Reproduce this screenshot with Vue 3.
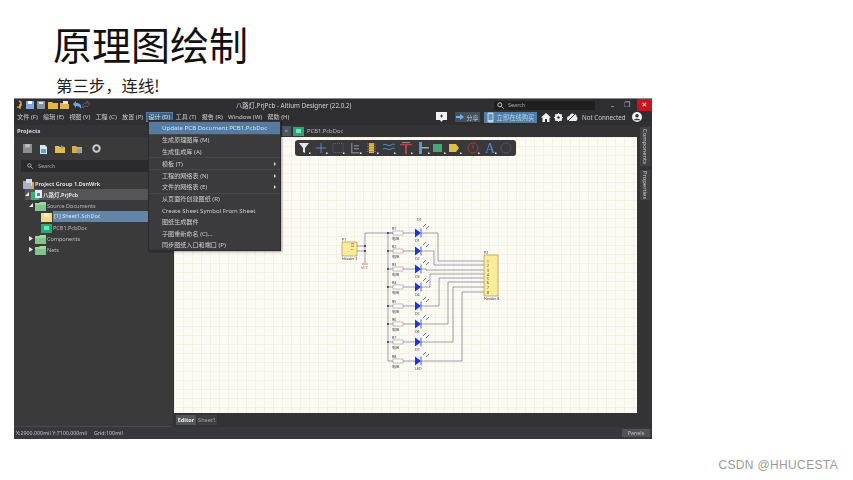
<script setup>
const menuBar = [
  { t: '文件 (F)' }, { t: '编辑 (E)' }, { t: '视图 (V)' }, { t: '工程 (C)' }, { t: '放置 (P)' },
  { t: '设计 (D)', on: true }, { t: '工具 (T)' }, { t: '报告 (R)' }, { t: 'Window (W)' }, { t: '帮助 (H)' }
]
const menuItems = [
  { t: 'Update PCB Document PCB1.PcbDoc', on: true, sep: true },
  { t: '生成原理图库 (M)' },
  { t: '生成集成库 (A)', sep: true },
  { t: '模板 (T)', arrow: true, sep: true },
  { t: '工程的网络表 (N)', arrow: true },
  { t: '文件的网络表 (E)', arrow: true, sep: true },
  { t: '从页面符创建图纸 (R)' },
  { t: 'Create Sheet Symbol From Sheet' },
  { t: '图纸生成器件' },
  { t: '子图重新命名 (C)...' },
  { t: '同步图纸入口和端口 (P)' }
]
const tree = [
  { t: 'Project Group 1.DsnWrk', pad: 9, icon: 'group', cls: 'bold' },
  { t: '八路灯.PrjPcb', pad: 11, icon: 'prj', cls: 'bold grey', arrow: 'open' },
  { t: 'Source Documents', pad: 15, icon: 'folder', arrow: 'open' },
  { t: '[1] Sheet1.SchDoc', pad: 27, icon: 'sch', cls: 'blue' },
  { t: 'PCB1.PcbDoc', pad: 27, icon: 'pcb' },
  { t: 'Components', pad: 15, icon: 'folder', arrow: 'closed' },
  { t: 'Nets', pad: 15, icon: 'folder', arrow: 'closed' }
]
const rows = [
  { y: 234, r: 'R1', d: 'D1', turn: 438, to: 262 },
  { y: 252, r: 'R2', d: 'D2', turn: 434, to: 266 },
  { y: 270, r: 'R3', d: 'D3', turn: 426, to: 271 },
  { y: 288, r: 'R4', d: 'D4', turn: 430, to: 275 },
  { y: 307, r: 'R5', d: 'D5', turn: 439, to: 279 },
  { y: 325, r: 'R6', d: 'D6', turn: 448, to: 283 },
  { y: 343, r: 'R7', d: 'D7', turn: 453, to: 288 },
  { y: 362, r: 'R8', d: 'D8', turn: 462, to: 293 }
]
const pins = [262, 266, 271, 275, 279, 283, 288, 293]
</script>

<template>
  <div class="slide">
    <h1 class="title">原理图绘制</h1>
    <p class="step">第三步，连线!</p>

    <section class="win">
      <header class="titlebar">
        <div class="quick">
          <svg width="78" height="12" viewBox="0 0 78 12">
            <path d="M4 2a3 3 0 1 1-2 6M5 5v5" fill="none" stroke="#e8b040" stroke-width="1.4" />
            <rect x="11" y="2" width="8" height="8" fill="#7fa6e0" />
            <rect x="13" y="2" width="4" height="3" fill="#fff" />
            <rect x="22" y="2" width="8" height="8" fill="#8c94a2" />
            <rect x="24" y="3" width="4" height="2" fill="#e4e4e4" />
            <path d="M33 3h4l1 1h5v6h-10z" fill="#e6b44c" />
            <path d="M45 4h4l1 1h4v5h-9z" fill="#e6b44c" />
            <rect x="48" y="2" width="5" height="3" fill="#dfe6ee" />
            <path d="M58 5l3-3v2c4 0 6 2 5 6-1-2-2-3-5-3v2z" fill="#6fa6d8" />
            <path d="M75 5l-3-3v2c-3 0-5 2-4 5 1-2 2-2 4-2v1z" fill="none" stroke="#777" stroke-width=".7" />
          </svg>
        </div>
        <span class="wintitle">八路灯.PrjPcb - Altium Designer (22.0.2)</span>
        <div class="searchbox">
          <svg width="7" height="7" viewBox="0 0 8 8"><circle cx="3.2" cy="3.2" r="2.3" fill="none" stroke="#ddd" /><path d="M5 5l2.5 2.5" stroke="#ddd" /></svg>
          Search
        </div>
        <div class="winbtns">
          <span class="wb">–</span>
          <span class="wb restore">❐</span>
          <span class="wb close">✕</span>
        </div>
      </header>

      <nav class="menubar">
        <span v-for="m in menuBar" :key="m.t" class="mi" :class="{ active: m.on }">{{ m.t }}</span>
        <div class="menuright">
          <span class="chat">
            <svg width="13" height="10" viewBox="0 0 13 10"><path d="M1 0h11v8H8L6.5 10 5 8H1z" fill="#f2f2f2" /><path d="M6.5 2.500v3M5 4h3" stroke="#444" /></svg>
          </span>
          <span class="share">
            <svg width="8" height="6" viewBox="0 0 8 6"><path d="M0 2h4V0l4 3-4 3V4H0z" fill="#6fb0ea" /></svg>
            分享
          </span>
          <span class="buy">
            <svg width="7" height="11" viewBox="0 0 7 11"><rect x=".5" y=".5" width="6" height="10" rx="1" fill="#c3d3e2" /><rect x="1.500" y="2" width="4" height="6" fill="#6b91b5" /></svg>
            立即在线购买
          </span>
          <svg class="rico" width="10" height="9" viewBox="0 0 10 9"><path d="M5 0l5 4.500H8.500V9H6V6H4v3H1.500V4.500H0z" fill="#f2f2f2" /></svg>
          <svg class="rico" width="9" height="9" viewBox="0 0 9 9"><circle cx="4.500" cy="4.500" r="2.800" fill="none" stroke="#f2f2f2" stroke-width="2" /><path d="M4.500 0v9M0 4.500h9M1.300 1.300l6.400 6.400M7.700 1.300L1.300 7.700" stroke="#f2f2f2" stroke-width="1.100" /><circle cx="4.500" cy="4.500" r="1.200" fill="#2f2f31" /></svg>
          <svg class="rico cloud" width="11" height="8" viewBox="0 0 11 8"><path d="M2.500 8a2.500 2.500 0 0 1 0-5C3 1 5 0 6.500 1 8.500.5 10 2 9.500 3.500 11.500 5 10 8 8.500 8z" fill="#ededed" /><path d="M1 8L9 0" stroke="#2f2f31" /></svg>
          <span class="nc">Not Connected</span>
          <svg class="user" width="10" height="10" viewBox="0 0 10 10"><circle cx="5" cy="5" r="5" fill="#f2f2f2" /><circle cx="5" cy="3.700" r="1.700" fill="#2f2f31" /><path d="M1.800 8.200c.5-2 5.900-2 6.400 0" fill="#2f2f31" /></svg>
        </div>
      </nav>

      <div class="body">
        <aside class="side">
          <div class="panelhead">Projects</div>
          <div class="ptools">
            <svg width="9" height="9" viewBox="0 0 8 8"><rect width="8" height="8" fill="#8b8d90" /><rect x="2" width="4" height="3" fill="#bdbdbd" /></svg>
            <svg width="9" height="10" viewBox="0 0 9 10"><path d="M1 1h5l2 2v7H1z" fill="#d7e6f3" /><path d="M2 5h5v4H2z" fill="#5e9fd4" /></svg>
            <svg width="10" height="10" viewBox="0 0 10 10"><path d="M0 2h4l1 1h5v6H0z" fill="#e4b94e" /><path d="M6 1l3 2-3 2z" fill="#6d9cc4" /></svg>
            <svg width="10" height="10" viewBox="0 0 10 10"><path d="M0 2h4l1 1h5v6H0z" fill="#d9ae48" /><circle cx="7" cy="7" r="2.500" fill="#7ea3bf" /></svg>
            <svg class="gear" width="9" height="9" viewBox="0 0 9 9"><circle cx="4.500" cy="4.500" r="3.200" fill="none" stroke="#c9cdd2" stroke-width="2" /></svg>
          </div>
          <div class="psearch">
            <svg width="6" height="6" viewBox="0 0 8 8"><circle cx="3.200" cy="3.200" r="2.300" fill="none" stroke="#ccc" /><path d="M5 5l2.500 2.500" stroke="#ccc" /></svg>
            Search
          </div>
          <ul class="tree">
            <li v-for="n in tree" :key="n.t" class="node" :class="n.cls" :style="{ paddingLeft: n.pad + 'px' }">
              <svg v-if="n.arrow" class="tw" width="4" height="5" viewBox="0 0 4 5">
                <path :d="n.arrow === 'open' ? 'M4 0v4H0z' : 'M0 0l4 2.500L0 5z'" fill="#e8e8e8" />
              </svg>
              <svg class="nico" width="11" height="10" viewBox="0 0 11 10">
                <template v-if="n.icon === 'group'">
                  <path d="M0 2h4l1 1h6v7H0z" fill="#d6a65c" />
                  <rect x="3" y="0" width="6" height="7" fill="#d9dbe4" />
                  <rect x="1" y="4" width="7" height="6" fill="#aab0d0" />
                </template>
                <template v-else-if="n.icon === 'prj'">
                  <rect x="0" y="2" width="8" height="8" fill="#38b07a" />
                  <rect x="4" y="0" width="7" height="8" fill="#e9eef2" />
                  <rect x="6" y="3" width="3" height="3" fill="#3b8ec0" />
                </template>
                <template v-else-if="n.icon === 'folder'">
                  <path d="M0 2h4l1-1h6v9H0z" fill="#9fd59f" />
                  <rect x="0" y="4" width="11" height="6" fill="#7fc48a" />
                </template>
                <template v-else-if="n.icon === 'sch'">
                  <rect x="0" y="1" width="11" height="9" fill="#f1d98a" />
                  <path d="M3 1h5v4H3z" fill="#f7efc8" />
                </template>
                <template v-else>
                  <rect x="0" y="1" width="11" height="9" fill="#26a878" />
                  <rect x="3" y="3" width="5" height="4" fill="#7ee0b6" />
                </template>
              </svg>
              <span class="nlabel">{{ n.t }}</span>
            </li>
          </ul>
          <div class="panelfoot"></div>
        </aside>

        <main class="main">
          <div class="doctabs">
            <span class="spacer"></span>
            <span class="tabx">×</span>
            <svg width="11" height="9" viewBox="0 0 11 9"><rect width="11" height="9" fill="#26a878" /><rect x="3" y="2" width="5" height="4" fill="#7ee0b6" /></svg>
            <span class="doctab">PCB1.PcbDoc</span>
          </div>

          <div class="canvas">
            <div class="floatbar">
              <svg width="221" height="16" viewBox="0 0 221 16">
                <path d="M4 3h10l-4 5v5l-2-1V8z" fill="#e6e6e6" />
                <path d="M26 3v10M21 8h10" stroke="#5b8fd0" stroke-width=".9" />
                <rect x="38" y="3.500" width="10" height="9" fill="none" stroke="#4a6fc0" stroke-width=".8" stroke-dasharray="1 1" />
                <path d="M56 3h1.500v9h7v1.500H56zM59 5h5v1.500h-5zM59 8h5v1.500h-5z" fill="#75787c" />
                <rect x="74" y="3" width="5" height="10" fill="#e8bb50" />
                <path d="M72 4h9M72 6.500h9M72 9h9M72 11.500h9" stroke="#a67d24" stroke-width=".7" />
                <path d="M88 5c3-2 5 2 8 0s4 0 4 0M88 9c3-2 5 2 8 0s4 0 4 0" fill="none" stroke="#5f98c8" stroke-width=".9" />
                <path d="M105 4h12v1.300h-5V14h-2V5.300h-5z" fill="#b94444" />
                <rect x="107" y="2" width="8" height="1.200" fill="#888" />
                <rect x="124" y="2" width="3" height="12" fill="#5f98c8" />
                <rect x="127" y="7" width="7" height="1.500" fill="#9ab" />
                <rect x="138" y="4" width="9" height="8" fill="#48a874" />
                <path d="M154 4h7l3 4-3 4h-7z" fill="#e0bd47" />
                <circle cx="178" cy="8" r="5" fill="none" stroke="#a83a3a" stroke-width="1" />
                <path d="M178 4.500v4" stroke="#a83a3a" stroke-width="1" />
                <text x="190" y="13" font-size="14" fill="#5a84d0" font-family="Liberation Serif, serif">A</text>
                <circle cx="211" cy="8" r="5" fill="none" stroke="#4a5a6e" stroke-width="1" />
                <g fill="#eee">
                  <rect x="14" y="12.500" width="1.500" height="1.500" /><rect x="31" y="12.500" width="1.500" height="1.500" /><rect x="48" y="12.500" width="1.500" height="1.500" />
                  <rect x="65" y="12.500" width="1.500" height="1.500" /><rect x="82" y="12.500" width="1.500" height="1.500" /><rect x="99" y="12.500" width="1.500" height="1.500" />
                  <rect x="116" y="12.500" width="1.500" height="1.500" /><rect x="133" y="12.500" width="1.500" height="1.500" /><rect x="149" y="12.500" width="1.500" height="1.500" />
                  <rect x="165" y="12.500" width="1.500" height="1.500" /><rect x="183" y="12.500" width="1.500" height="1.500" /><rect x="200" y="12.500" width="1.500" height="1.500" />
                </g>
              </svg>
            </div>

            <!-- schematic; viewBox uses page coordinates -->
            <svg class="sch" width="463" height="277" viewBox="174 138 463 277">
              <g fill="none" stroke="#7a7a92" stroke-width=".7">
                <path d="M357 247h8M357 252h8M365 234v30M365 234h28M388 234v128" />
              </g>
              <rect x="342" y="243" width="15" height="14" fill="#fbeb9a" stroke="#a58a30" stroke-width=".6" />
              <text x="342" y="241.500" class="s lab">P1</text>
              <text x="342" y="261" class="s lab">Header 3</text>
              <text x="351" y="254" class="s pin" transform="rotate(-90 351 251)">1 2 3</text>
              <circle cx="365" cy="247" r="1" fill="#20208a" />
              <circle cx="365" cy="252" r="1" fill="#20208a" />
              <path d="M362 265h6" stroke="#c24a4a" stroke-width=".7" />
              <text x="361" y="270" class="s vcc">VCC</text>

              <g v-for="(r, i) in rows" :key="r.r">
                <circle v-if="i < 7" cx="388" :cy="r.y" r="1" fill="#20208a" />
                <path :d="`M388 ${r.y}h5M403 ${r.y}h12M421 ${r.y}H${r.turn}V${r.to}H484`" fill="none" stroke="#7a7a92" stroke-width=".7" />
                <rect x="393" :y="r.y - 2" width="10" height="4" fill="#fff" stroke="#8a6a6a" stroke-width=".45" />
                <text x="392" :y="r.y - 3" class="s lab">{{ r.r }}</text>
                <text x="392" :y="r.y + 6.500" class="s lab">电阻</text>
                <path :d="`M415 ${r.y - 4.500}l6 4.500-6 4.500z`" fill="#1f35d8" />
                <path :d="`M421 ${r.y - 4.500}v9`" stroke="#1f35d8" stroke-width=".8" />
                <text v-if="i === 0" x="417" :y="r.y - 12" class="s lab">D1</text>
                <path :d="`M423 ${r.y - 6}l3-3M426 ${r.y - 4}l3-3`" stroke="#1f35d8" stroke-width=".7" />
                <text v-if="i < 7" x="415" :y="r.y + 9" class="s lab">{{ 'D' + (i + 1) }}</text>
                <text v-else x="415" :y="r.y + 9" class="s lab">LED</text>
              </g>

              <rect x="484" y="256" width="14" height="41" fill="#fbeb9a" stroke="#a58a30" stroke-width=".6" />
              <text x="484" y="254.500" class="s lab">P2</text>
              <text x="484" y="301" class="s lab">Header 8</text>
              <text v-for="(p, i) in pins" :key="p" x="487" :y="p + 1.500" class="s pin">{{ i + 1 }}</text>
            </svg>
          </div>

          <div class="sheettabs">
            <span class="sheettab on">Editor</span>
            <span class="sheettab">Sheet1</span>
          </div>
        </main>

        <aside class="rstrip">
          <span class="vtab comp">Components</span>
          <span class="vtab prop">Properties</span>
        </aside>

        <!-- open dropdown -->
        <div class="dropdown">
          <div v-for="it in menuItems" :key="it.t" class="ditem" :class="{ on: it.on, sep: it.sep }">
            <span>{{ it.t }}</span>
            <i v-if="it.arrow" class="darrow"></i>
          </div>
        </div>
      </div>

      <footer class="status">
        <span>X:2900.000mil Y:7100.000mil</span>
        <span class="grid">Grid:100mil</span>
        <span class="panels">Panels</span>
      </footer>
    </section>

    <div class="mark">CSDN @HHUCESTA</div>
  </div>
</template>

<style>
html, body { margin: 0; background: #fff; }
</style>

<style scoped>
.slide {
  width: 853px; height: 480px; overflow: hidden; background: #fff; position: relative;
  font-family: "Noto Sans", "Noto Sans CJK SC", sans-serif;
  display: flex; flex-direction: column;
}
.title {
  margin: 19px 0 0 53px; font: 400 39px/48px "Noto Sans CJK SC", sans-serif; color: #111; height: 48px;
}
.step {
  margin: 7px 0 0 56px; font: 400 16.400px/22px "Noto Sans CJK SC", sans-serif; color: #222; height: 22px;
}
.win {
  margin: 2px 0 0 14px; width: 638px; height: 341px; background: #333335; color: #cfd0d2;
  display: flex; flex-direction: column; filter: blur(.4px); font-size: 6px;
  border-top: 1px solid #8a8a8a; box-sizing: border-box;
}
.titlebar { height: 12px; background: #2f2f31; display: flex; align-items: center; position: relative; }
.quick { width: 80px; display: flex; padding-left: 1px; }
.wintitle { position: absolute; left: 222px; font-size: 6.300px; color: #d4d4d4; }
.searchbox {
  position: absolute; left: 480px; width: 98px; height: 9px; background: #1f1f20; display: flex; align-items: center;
  gap: 4px; padding-left: 3px; font-size: 5.500px; color: #aaa; box-sizing: content-box;
}
.winbtns { margin-left: auto; display: flex; align-items: center; height: 100%; }
.wb { width: 15px; text-align: center; font-size: 7px; color: #bbb; }
.restore { font-family: "DejaVu Sans", sans-serif; margin-right: 2px; }
.close { background: #c8141c; color: #fff; height: 100%; line-height: 12px; font-family: "DejaVu Sans", sans-serif; }
.menubar { height: 14px; background: #2f2f31; display: flex; align-items: flex-start; padding: 1px 0 0 1px; position: relative; box-sizing: border-box; }
.mi { padding: 0 2.250px; font-size: 6.100px; line-height: 10px; margin-right: .75px; white-space: nowrap; color: #cdcdcd; }
.mi.active { background: #3f5f80; color: #d7e3f0; box-shadow: inset 0 0 0 .5px #6d96c0; }
.menuright { position: absolute; left: 420px; right: 0; top: 0; height: 12px; display: flex; align-items: center; }
.chat { width: 14px; height: 11px; display: flex; align-items: center; justify-content: center; margin-right: 7px; }
.share { width: 25px; height: 10px; background: #44505c; display: flex; align-items: center; justify-content: center; gap: 2px; font-size: 6px; margin-right: 4px; }
.buy { width: 53px; height: 11px; background: #4f7ea9; color: #b9d2ea; display: flex; align-items: center; justify-content: center; gap: 3px; font-size: 6.300px; margin-right: 4px; }
.rico { margin-right: 3px; }
.cloud { margin-right: 0; margin-left: 1px; }
.nc { font-size: 6.200px; color: #c9c9c9; margin-left: 4px; }
.user { margin-left: 6px; }
.body { flex: 1; display: flex; min-height: 0; position: relative; }
.side { width: 159px; background: #3a3a3b; display: flex; flex-direction: column; margin-right: 1px; }
.panelhead { height: 12px; line-height: 12px; padding-left: 3px; font-weight: 700; font-size: 5.800px; background: #343436; color: #ddd; }
.ptools { height: 23px; display: flex; align-items: center; gap: 7px; padding-left: 9px; }
.gear { margin-left: 3px; }
.psearch {
  margin: 0 0 0 7px; height: 12px; background: #2b2b2d; display: flex; align-items: center; gap: 5px; padding-left: 6px;
  font-size: 5.500px; color: #aaa;
}
.tree { list-style: none; margin: 6px 0 0; padding: 0; }
.node { height: 11px; display: flex; align-items: center; gap: 1px; font-size: 5.500px; color: #b9bbbd; position: relative; white-space: nowrap; }
.node.bold { font-weight: 700; color: #dcdcdc; }
.node.grey { background: #555557; margin-left: 11px; padding-left: 0 !important; }
.node.blue .nlabel { background: #6386a8; color: #dbe6f0; flex: 1; height: 11px; line-height: 11px; padding-left: 1px; }
.tw { margin-right: 1px; }
.nico { flex: none; }
.panelfoot { flex: 1; margin: 0 2px 0 0; border-bottom: 1px solid #4a4a4b; }
.main { flex: 1; display: flex; flex-direction: column; min-width: 0; }
.doctabs { height: 12px; background: #333335; display: flex; align-items: center; gap: 2px; color: #bbb; font-size: 5.800px; }
.spacer { width: 106px; }
.tabx { width: 9px; text-align: center; background: #4a5661; height: 10px; line-height: 10px; }
.doctab { margin-left: 1px; }
.canvas {
  flex: 1; position: relative; overflow: hidden; background-color: #fbfaf3;
  background-image: linear-gradient(#f3f1e4 1px, transparent 1px), linear-gradient(90deg, #f3f1e4 1px, transparent 1px);
  background-size: 9px 9px;
}
.floatbar { position: absolute; left: 121px; top: 3px; width: 221px; height: 16px; background: #39393b; border-radius: 3px; display: flex; }
.sch { position: absolute; left: 0; top: 0; }
.s { font-family: "Noto Sans", "Noto Sans CJK SC", sans-serif; }
.lab { font-size: 3.600px; fill: #3a3a55; }
.pin { font-size: 3.200px; fill: #333; }
.vcc { font-size: 4px; fill: #c24a4a; }
.sheettabs { height: 14px; background: #333335; display: flex; align-items: center; padding-left: 2px; gap: 1px; font-size: 5.500px; }
.sheettab { width: 20px; height: 10px; line-height: 10px; text-align: center; color: #a8a8a8; background: #3e3e40; }
.sheettab.on { background: #55565a; color: #eee; font-weight: 700; }
.rstrip { width: 15px; background: #333335; position: relative; }
.vtab { position: absolute; left: 3px; width: 10px; writing-mode: vertical-rl; background: #434345; font-size: 5.800px; line-height: 10px; text-align: center; color: #cfcfcf; }
.comp { top: 2px; height: 39px; }
.prop { top: 45px; height: 30px; }
.dropdown {
  position: absolute; left: 134px; top: -5px; width: 133px; height: 131px; background: #3b3b3d; border: 1px solid #2c2c2e;
  box-sizing: border-box; padding-top: 1px; box-shadow: 1px 1px 2px rgba(0,0,0,.35); z-index: 2;
}
.ditem { height: 11.500px; display: flex; align-items: center; padding-left: 13px; font-size: 6.100px; color: #cfcfcf; position: relative; white-space: nowrap; }
.ditem.on { background: #557ba0; color: #d6e4f1; }
.ditem.sep { margin-bottom: .5px; box-shadow: 0 .5px 0 #555; }
.darrow { position: absolute; right: 4px; top: 4px; border-left: 2.500px solid #ddd; border-top: 2px solid transparent; border-bottom: 2px solid transparent; }
.status { height: 12px; background: #38383a; display: flex; align-items: center; padding-left: 2px; font-size: 5.300px; color: #c2c2c2; position: relative; }
.grid { margin-left: 7px; }
.panels { margin-left: auto; margin-right: 2px; width: 28px; height: 8px; line-height: 8px; text-align: center; background: #525254; }
.mark {
  position: absolute; right: 15px; top: 458px; font: 400 12px/14px "Liberation Sans", sans-serif; color: #9a9a9a; letter-spacing: .35px;
}
</style>
